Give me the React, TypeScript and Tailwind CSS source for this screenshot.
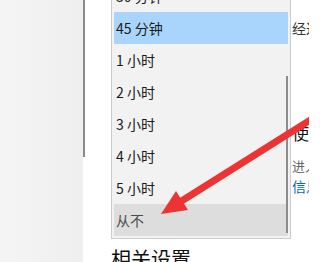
const options = ["30 分钟", "45 分钟", "1 小时", "2 小时", "3 小时", "4 小时", "5 小时", "从不"];

export default function App() {
  return (
    <div
      className="relative flex h-[262px] w-[309px] overflow-hidden bg-white"
      style={{ fontFamily: '"Noto Sans CJK SC", "Noto Sans", sans-serif' }}
    >
      {/* left pane */}
      <div className="h-full w-[83px] bg-gradient-to-r from-[#f4f4f4] to-[#efefef]" />
      <div className="h-full w-[2px] bg-white">
        <div className="h-[157px] w-[2px] bg-[#8a8a8a]" />
      </div>

      {/* main */}
      <div className="flex min-w-0 flex-1 flex-col pl-[26px]">
        <div className="flex items-start">
          {/* dropdown list */}
          <div className="relative -mt-[23px] h-[262px] w-[180px] shrink-0 border border-[#cccccc] bg-[#f2f2f2] p-[2px]">
            {options.map((label) => (
              <div
                key={label}
                className={
                  label === "45 分钟"
                    ? "flex h-[32px] items-center bg-[#a9d4fb] pl-[2px] text-[14px] text-[#1b1b1b]"
                    : label === "从不"
                      ? "flex h-[32px] items-center bg-[#dddddd] pl-[2px] text-[14px] text-[#4a4a4a]"
                      : "flex h-[32px] items-center pl-[2px] text-[14px] text-[#1b1b1b]"
                }
              >
                {label}
              </div>
            ))}
            {/* scrollbar thumb */}
            <div className="absolute right-[2px] top-[98px] h-[157px] w-[2px] bg-[#8c8c8c]" />
          </div>

          {/* right column text (clipped) */}
          <div className="flex min-w-0 flex-1 flex-col overflow-hidden whitespace-nowrap pl-[1px]">
            <div className="mt-[20px] text-[14px] leading-[16px] text-[#333333]">经过多长时间后</div>
            <div className="mt-[87px] text-[17px] leading-[20px] text-[#111111]">使用电池电量时</div>
            <div className="mt-[15px] text-[13px] leading-[16px] text-[#666666]">进入睡眠状态</div>
            <div className="mt-[4px] text-[14px] leading-[16px] text-[#0067c0]">信息</div>
          </div>
        </div>
        <div className="mt-[8px] whitespace-nowrap text-[20px] leading-[24px] text-[#111111]">相关设置</div>
      </div>

      {/* red annotation arrow */}
      <svg className="pointer-events-none absolute inset-0" width="309" height="262" viewBox="0 0 309 262">
        <line x1="320" y1="114" x2="180" y2="202" stroke="#ec3434" strokeWidth="7" strokeLinecap="round" />
        <polygon points="161,214 176,191 188,210" fill="#ec3434" />
      </svg>
    </div>
  );
}
